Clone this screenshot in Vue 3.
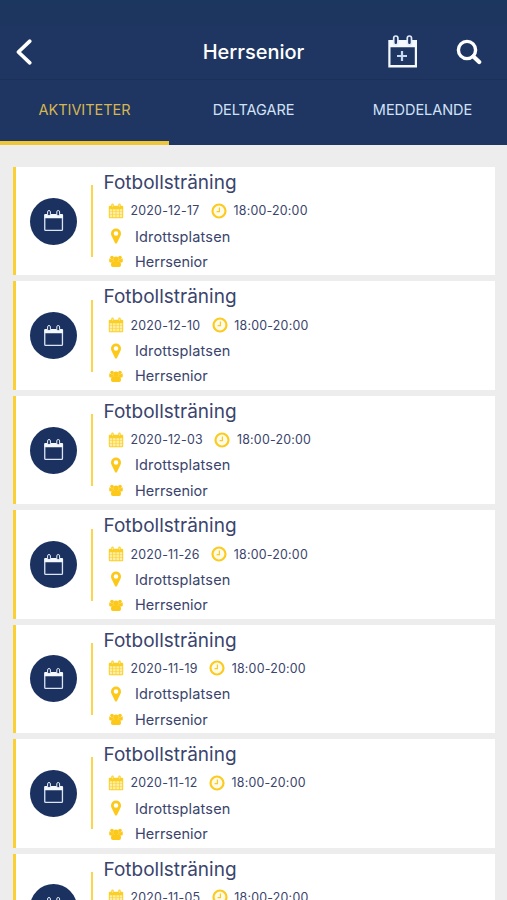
<script setup>
const tabs = [
  { label: 'AKTIVITETER', active: true },
  { label: 'DELTAGARE', active: false },
  { label: 'MEDDELANDE', active: false },
]

const activities = [
  '2020-12-17',
  '2020-12-10',
  '2020-12-03',
  '2020-11-26',
  '2020-11-19',
  '2020-11-12',
  '2020-11-05',
].map((date) => ({
  date,
  title: 'Fotbollsträning',
  time: '18:00-20:00',
  place: 'Idrottsplatsen',
  group: 'Herrsenior',
}))
</script>

<template>
  <div class="screen">
    <header class="header">
      <div class="bar">
        <div class="side">
          <svg class="back" viewBox="0 0 18 28" width="18" height="28">
            <path d="M14.8 3.2 L3.4 14 L14.8 24.8" fill="none" stroke="#fff" stroke-width="3.7" stroke-linecap="round" stroke-linejoin="round" />
          </svg>
        </div>
        <h1 class="heading">Herrsenior</h1>
        <div class="side actions">
          <svg class="add" viewBox="0 0 30 34" width="30" height="34">
            <path fill="#f4f8ff" fill-rule="evenodd" d="M.3 5h28.7v27.6H.3z M2.5 12.200v17.900h24.300V12.200z" />
            <g fill="#1e3661" stroke="#e3ecfb" stroke-width="1.7">
              <rect x="5.700" y="1" width="4.200" height="8.800" rx="2.100" />
              <rect x="19.300" y="1" width="4.200" height="8.800" rx="2.100" />
            </g>
            <path d="M14 16v10M9 21h10" stroke="#c9d9f1" stroke-width="2.200" fill="none" />
          </svg>
          <svg class="search" viewBox="0 0 26 26" width="26" height="26">
            <circle cx="11" cy="11" r="8.6" fill="none" stroke="#fff" stroke-width="3.4" />
            <path d="M17.4 17.4L23.2 23" stroke="#fff" stroke-width="4.2" stroke-linecap="round" />
          </svg>
        </div>
      </div>
      <nav class="tabs">
        <div v-for="tab in tabs" :key="tab.label" class="tab" :class="{ active: tab.active }">
          <span>{{ tab.label }}</span>
        </div>
      </nav>
    </header>

    <main class="list">
      <article v-for="item in activities" :key="item.date" class="card">
        <div class="badge">
          <svg viewBox="0 0 20 22" width="20" height="22">
            <path fill="#f4f8ff" d="M1.1 3.900h17a1 1 0 0 1 1 1v3.300H.1V4.900a1 1 0 0 1 1-1z" />
            <path fill="none" stroke="#dbe5f6" stroke-width="1.300" d="M.75 7.700v11.700q0 .9.900.9h15.900q.9 0 .9-.9V7.700" />
            <g fill="#1b3260" stroke="#e6eefb" stroke-width="1">
              <rect x="3.600" y=".5" width="2.800" height="5.200" rx="1.400" />
              <rect x="12.800" y=".5" width="2.800" height="5.200" rx="1.400" />
            </g>
          </svg>
        </div>
        <div class="rule"></div>
        <div class="details">
          <h2 class="title">{{ item.title }}</h2>
          <div class="row">
            <svg class="icon" viewBox="0 0 16 16" width="16" height="16">
              <path fill="#fbd026" d="M1.8 2.8h1.5V1.6q0-1 1.2-1t1.2 1v1.2h4.6V1.6q0-1 1.2-1t1.2 1v1.2h1.5q1 0 1 1v10.4q0 1-1 1H1.8q-1 0-1-1V3.8q0-1 1-1z" />
              <path fill="#ffeeaa" d="M1.8 6.2h2.5v2.2H1.8zM5 6.2h2.6v2.2H5zM8.4 6.2H11v2.2H8.4zM11.7 6.2h2.5v2.2h-2.5zM1.8 9.1h2.5v2.3H1.8zM5 9.1h2.6v2.3H5zM8.4 9.1H11v2.3H8.4zM11.7 9.1h2.5v2.3h-2.5zM1.8 12.1h2.5v2.2H1.8zM5 12.1h2.6v2.2H5zM8.4 12.1H11v2.2H8.4zM11.7 12.1h2.5v2.2h-2.5z" />
              <path d="M4.5 1.5v2.4M11.5 1.5v2.4" stroke="#ffeaa0" stroke-width=".7" />
            </svg>
            <span class="small">{{ item.date }}</span>
            <svg class="clock" viewBox="0 0 16 16" width="16" height="16">
              <circle cx="8" cy="8" r="6.5" fill="#fffbea" stroke="#fccb22" stroke-width="2.2" />
              <path d="M8.4 4.4v4.2H5.6" fill="none" stroke="#fccb22" stroke-width="1.2" />
            </svg>
            <span class="small">{{ item.time }}</span>
          </div>
          <div class="row">
            <svg class="icon" viewBox="0 0 16 16" width="16" height="16">
              <path fill="#fcc91b" fill-rule="evenodd" d="M8 .5a5 5 0 0 1 5 5c0 .9-.15 1.6-.5 2.3L9 15q-.3.6-1 .6T7 15L3.5 7.8C3.15 7.1 3 6.4 3 5.5a5 5 0 0 1 5-5z M8 3.2a2.3 2.3 0 1 0 0 4.6 2.3 2.3 0 0 0 0-4.6z" />
            </svg>
            <span class="text">{{ item.place }}</span>
          </div>
          <div class="row">
            <svg class="icon" viewBox="0 0 16 16" width="16" height="16">
              <g fill="#fcc91b">
                <circle cx="4" cy="4.5" r="1.8" />
                <circle cx="12" cy="4.5" r="1.8" />
                <circle cx="8" cy="6.2" r="2.8" />
                <path d="M1.4 5.2q1 1 2.6 1 .6 0 1.1-.2.1 1.3.9 2.3-1.6 0-2.5 1.3H2.4q-1.2 0-1.2-1.3 0-2.6.2-3.100zM14.6 5.2q-1 1-2.6 1-.6 0-1.100-.2-.1 1.3-.9 2.3 1.6 0 2.5 1.3h1.100q1.2 0 1.2-1.3 0-2.6-.2-3.100z" />
                <path d="M5.6 8.1q1.1.9 2.4.9t2.4-.9q2.6 0 2.6 4.2 0 1.800-1.800 1.800H4.800q-1.800 0-1.800-1.800 0-4.200 2.600-4.200z" />
              </g>
            </svg>
            <span class="text group">{{ item.group }}</span>
          </div>
        </div>
      </article>
    </main>
  </div>
</template>

<style>
body {
  margin: 0;
  overflow: hidden;
}
</style>

<style scoped>
.screen {
  width: 100%;
  height: 900px;
  overflow: hidden;
  display: flex;
  flex-direction: column;
  background: #ededed;
  font-family: Inter, "Liberation Sans", sans-serif;
  color: #3a446c;
}

.header {
  flex: none;
  height: 145px;
  box-sizing: border-box;
  display: flex;
  flex-direction: column;
  background: linear-gradient(#1b365f, #1e3661 30px);
}

.bar {
  height: 54px;
  padding-top: 25px;
  display: grid;
  grid-template-columns: 1fr auto 1fr;
  align-items: center;
}

.side {
  display: flex;
  align-items: center;
  padding: 0 15px;
}

.actions {
  justify-content: flex-end;
  gap: 38px;
  padding-right: 25px;
}

.back,
.search {
  display: block;
}

.heading {
  margin: 0;
  color: #fff;
  font-size: 20px;
  font-weight: 550;
  line-height: 30px;
  letter-spacing: -0.02px;
}

.tabs {
  flex: 1;
  display: grid;
  grid-template-columns: repeat(3, 1fr);
  border-top: 1px solid #1b315a;
}

.tab {
  box-sizing: border-box;
  padding-top: 20px;
  text-align: center;
  font-size: 14.5px;
  line-height: 20px;
  letter-spacing: -0.05px;
  color: #d3e1f8;
}

.tab.active {
  color: #d6b553;
  border-bottom: 4px solid #edc737;
}

.list {
  padding: 22px 12px 0 13px;
  display: flex;
  flex-direction: column;
  gap: 6px;
}

.card {
  flex: none;
  height: 108.45px;
  box-sizing: border-box;
  display: flex;
  align-items: center;
  border-left: 3px solid #fbd034;
  background: #fff;
}

.badge {
  flex: none;
  width: 47px;
  height: 47px;
  margin-left: 14px;
  border-radius: 50%;
  background: #1b3260;
  display: flex;
  align-items: center;
  justify-content: center;
}

.rule {
  flex: none;
  width: 2px;
  height: 72px;
  margin-left: 14px;
  background: #fcd54b;
}

.details {
  align-self: flex-start;
  padding-left: 10.5px;
}

.title {
  margin: 0;
  font-size: 19px;
  font-weight: 400;
  line-height: 31px;
}

.row {
  height: 25.4px;
  display: flex;
  align-items: center;
  padding-left: 4.5px;
}

.icon,
.clock {
  flex: none;
}

.clock {
  margin-left: 11.5px;
}

.small {
  margin-left: 6.5px;
  font-size: 12.4px;
  letter-spacing: 0.22px;
}

.text {
  margin-left: 11px;
  font-size: 14.5px;
  letter-spacing: 0.17px;
}

.text.group {
  letter-spacing: 0;
}
</style>
